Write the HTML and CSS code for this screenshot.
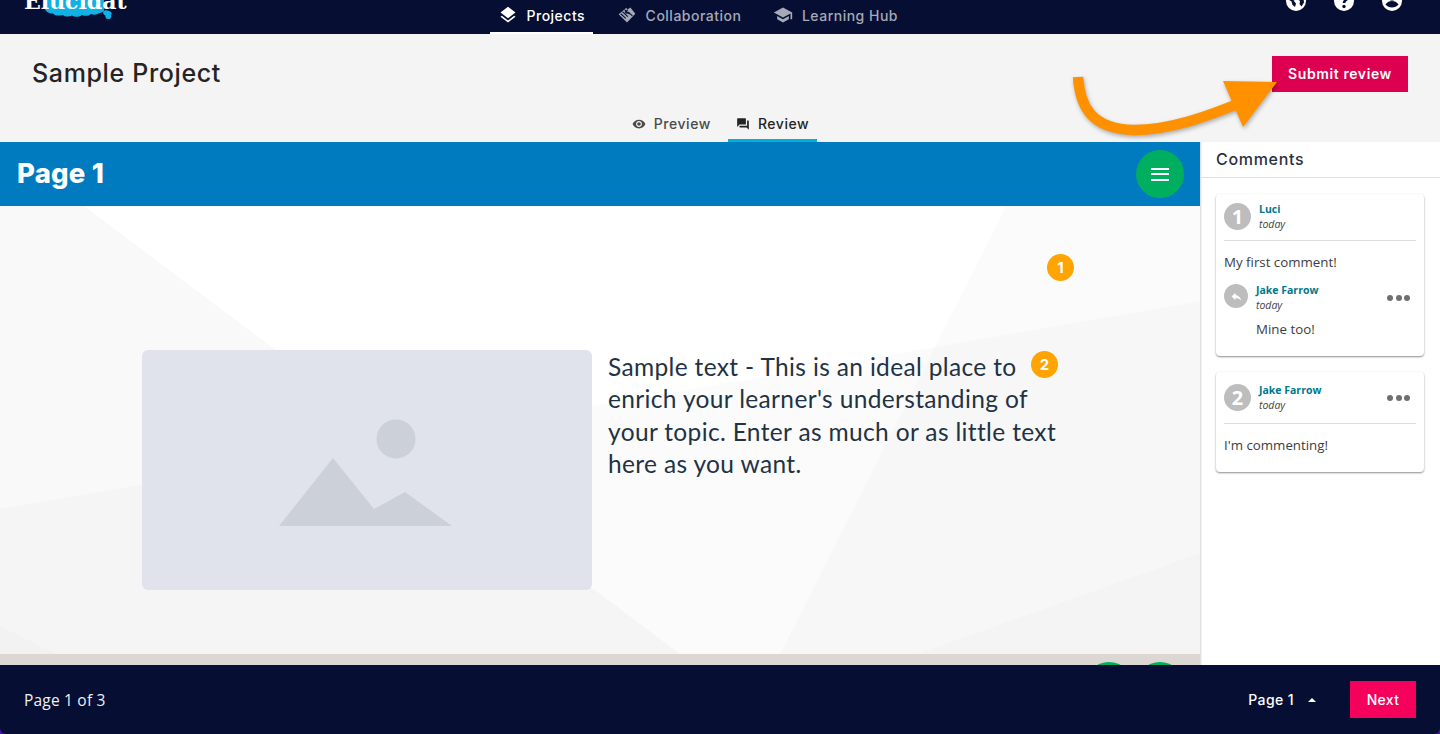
FILE: index.html
```html
<!DOCTYPE html>
<html lang="en">
<head>
<meta charset="utf-8">
<title>Sample Project</title>
<link rel="stylesheet" href="styles.css">
</head>
<body>
<div class="app">
  <header class="topnav">
    <div class="logo">
      <svg class="logo-cloud" width="70" height="22" viewBox="0 0 70 22"><path fill="#10b2e6" d="M0 0H60V10C60 12 57 13 55 13C53 15 50 15 47 14C45 16 41 16.500 38 15C36 17 31 17.500 28 15.500C25 17 21 17 19 15C16 16 11 16 9 13.500C5 14 1 11 0 7Z"/><path fill="#10b2e6" d="M59 12C60 10 63 9.500 65 11C67.500 11 68.500 14 67 15C68 17 66.500 19.500 64 19C62 19 61 17 61.500 15.500C60 15 59 14 59 12Z"/></svg>
      <span class="logo-text">Elucidat</span>
    </div>
    <nav class="navtabs">
      <a class="navtab is-active">
        <svg class="navicon" viewBox="0 0 24 24"><path d="M11.990 18.540l-7.370-5.730L3 14.070l9 7 9-7-1.630-1.270-7.380 5.740zM12 16l7.360-5.730L21 9l-9-7-9 7 1.630 1.270L12 16z"/></svg>
        <span>Projects</span>
      </a>
      <a class="navtab">
        <svg class="navicon" viewBox="0 0 24 24"><path d="M11 3.500L13 5L16 3L22 10.500L12 21L2 11Z"/><path class="navicon-cut" d="M9 5.500L15 11M6.500 8L13 14M4.500 10.500L10.500 16M13 5.500L10 8.500C11 10 12.500 10 14 9L18.500 13"/></svg>
        <span>Collaboration</span>
      </a>
      <a class="navtab">
        <svg class="navicon" viewBox="0 0 24 24"><path d="M5 13.180v4L12 21l7-3.820v-4L12 17l-7-3.820zM12 3L1 9l11 6 9-4.910V17h2V9L12 3z"/></svg>
        <span>Learning Hub</span>
      </a>
    </nav>
    <div class="navtools">
      <svg class="tool" viewBox="0 0 20 20"><circle cx="10" cy="10" r="10" fill="#fff"/><path fill="#060f33" d="M5 3.500l5 1 .5 4-3 1 2.500 3-1 3.500-2.500-2-1-3.500-3-2c.3-2.500 1.200-3.800 2.500-5zM13 6l4.500 1 .5 4.500-2.500 4-2-2.500.5-3-2-1.500z"/></svg>
      <svg class="tool" viewBox="0 0 20 20"><circle cx="10" cy="10" r="10" fill="#fff"/><path fill="none" stroke="#060f33" stroke-width="2.600" d="M6.500 6.500C6.500 4.500 8 3 10.200 3S13.800 4.400 13.800 6.200C13.800 8.700 10 9 10 12"/><circle cx="10" cy="15.500" r="1.700" fill="#060f33"/></svg>
      <svg class="tool" viewBox="0 0 20 20"><circle cx="10" cy="10" r="10" fill="#fff"/><circle cx="10" cy="6" r="3.500" fill="#060f33"/><path fill="#060f33" d="M3.500 13.500C5 11 7.500 10 10 10s5 1 6.500 3.500C15 15.500 12.500 16.500 10 16.500s-5-1-6.500-3z"/></svg>
    </div>
  </header>

  <section class="projecthead">
    <div class="titlerow">
      <h1 class="title">Sample Project</h1>
      <button class="submit">Submit review</button>
    </div>
    <div class="subtabs">
      <a class="subtab">
        <svg class="subicon" viewBox="0 0 24 24"><path d="M12 4.500C7 4.500 2.730 7.610 1 12c1.730 4.390 6 7.500 11 7.500s9.270-3.110 11-7.500c-1.730-4.390-6-7.500-11-7.500zM12 17c-2.760 0-5-2.240-5-5s2.240-5 5-5 5 2.240 5 5-2.240 5-5 5zm0-8c-1.660 0-3 1.340-3 3s1.340 3 3 3 3-1.340 3-3-1.340-3-3-3z"/></svg>
        <span>Preview</span>
      </a>
      <a class="subtab is-active">
        <svg class="subicon" viewBox="0 0 24 24"><path d="M21 6h-2v9H6v2c0 .55.45 1 1 1h11l4 4V7c0-.55-.45-1-1-1zm-4 6V3c0-.55-.45-1-1-1H3c-.55 0-1 .45-1 1v14l4-4h10c.55 0 1-.45 1-1z"/></svg>
        <span>Review</span>
      </a>
    </div>
    <svg class="callout" width="220" height="70" viewBox="0 0 220 70">
      <path d="M8 7C10 35 20 59 64 60C100 60 135 47 170 33" fill="none" stroke="#ff9000" stroke-width="10.500"/>
      <path d="M153 11L207 12L173 57Z" fill="#ff9000"/>
    </svg>
  </section>

  <div class="workspace">
    <main class="lesson">
      <div class="pagebar">
        <h2 class="pagetitle">Page 1</h2>
        <button class="menubtn" aria-label="Menu"><i></i><i></i><i></i></button>
      </div>
      <div class="stage">
        <svg class="stage-bg" width="1200" height="448" viewBox="0 0 1200 448" preserveAspectRatio="none">
          <path fill="#f9f9f9" d="M0 0H84L680 448H0Z"/>
          <path fill="#000" fill-opacity=".015" d="M0 303L1200 95V448H0Z"/>
          <path fill="#000" fill-opacity=".014" d="M1006 0H1200V448H780Z"/>
          <path fill="#000" fill-opacity=".012" d="M917 448L1200 347V448Z"/>
          <path fill="#000" fill-opacity=".012" d="M0 420L57 448H0Z"/>
        </svg>
        <div class="media">
          <div class="placeholder">
            <svg width="176" height="110" viewBox="0 0 176 110"><circle cx="117" cy="20" r="19.500" fill="#ccd0d9"/><path fill="#ccd0d9" d="M0 107L54 39L95 90L126 73L173 107Z"/></svg>
          </div>
          <p class="bodytext">Sample text - This is an ideal place to enrich your learner's understanding of your topic. Enter as much or as little text here as you want.</p>
          <span class="pin pin-one">1</span>
          <span class="pin pin-two">2</span>
        </div>
      </div>
      <div class="lesson-foot"><i class="fab"></i><i class="fab"></i></div>
    </main>

    <aside class="comments">
      <h3 class="comments-title">Comments</h3>
      <div class="comment-list">
        <article class="card">
          <div class="card-head">
            <span class="avatar">1</span>
            <div class="meta"><strong class="author">Luci</strong><em class="when">today</em></div>
          </div>
          <div class="card-body">
            <p class="msg">My first comment!</p>
            <div class="reply">
              <span class="avatar avatar-sm"><svg width="13" height="13" viewBox="0 0 24 24"><path fill="#fff" d="M10 9V5l-7 7 7 7v-4.100c5 0 8.500 1.600 11 5.100-1-5-4-10-11-11z"/></svg></span>
              <div class="reply-main">
                <strong class="author">Jake Farrow</strong><em class="when">today</em>
                <p class="msg msg-reply">Mine too!</p>
              </div>
              <span class="dots"><i></i><i></i><i></i></span>
            </div>
          </div>
        </article>
        <article class="card">
          <div class="card-head card-head-tall">
            <span class="avatar">2</span>
            <div class="meta"><strong class="author">Jake Farrow</strong><em class="when">today</em></div>
            <span class="dots dots-head"><i></i><i></i><i></i></span>
          </div>
          <div class="card-body card-body-short">
            <p class="msg">I'm commenting!</p>
          </div>
        </article>
      </div>
    </aside>
  </div>

  <footer class="pager">
    <span class="pager-count">Page 1 of 3</span>
    <div class="pager-actions">
      <span class="pager-select">Page 1<i class="caret"></i></span>
      <button class="next">Next</button>
    </div>
  </footer>
</div>
</body>
</html>
```

FILE: styles.css
```css
* { box-sizing: border-box; }
html, body { margin: 0; height: 100%; background: #4a12a8; overflow: hidden; }
p, h1, h2, h3 { margin: 0; }
button { border: 0; padding: 0; font: inherit; cursor: pointer; }
.app { height: 734px; display: flex; flex-direction: column; font-family: Inter, "Liberation Sans", sans-serif; border-radius: 0 0 6px 6px; overflow: hidden; }

.topnav { height: 34px; flex: none; background: #060f33; display: flex; padding: 0 38px 0 24px; overflow: hidden; }
.logo { width: 466px; flex: none; position: relative; }
.logo-cloud { position: absolute; left: 20px; top: 0; }
.logo-text { position: relative; display: block; margin-top: -11px; font: 700 22px/24px "DejaVu Serif", serif; color: #fff; }
.navtabs { display: flex; gap: 16px; }
.navtab { display: flex; align-items: center; height: 34px; padding: 0 8px 2px 8px; gap: 8.500px; font-size: 14px; font-weight: 500; letter-spacing: .5px; color: #a6a9b6; fill: #a6a9b6; border-bottom: 2px solid transparent; }
.navtab.is-active { color: #fff; fill: #fff; border-bottom-color: #fff; }
.navicon { width: 20px; height: 20px; flex: none; }
.navicon-cut { fill: none; stroke: #060f33; stroke-width: 1.300; }
.navtools { margin-left: auto; display: flex; gap: 28px; margin-top: -9px; }
.tool { width: 20px; height: 20px; }

.projecthead { height: 108px; flex: none; background: #f4f4f4; display: flex; flex-direction: column; position: relative; }
.titlerow { display: flex; justify-content: space-between; align-items: flex-start; padding: 22px 32px 0; height: 84px; }
.title { font-size: 25px; line-height: 34px; font-weight: 500; color: #242424; letter-spacing: .65px; }
.submit { width: 136px; height: 36px; padding-bottom: 2px; background: #de0050; color: #fff; font-size: 14px; font-weight: 600; letter-spacing: .6px; }
.subtabs { display: flex; justify-content: center; height: 24px; }
.subtab { display: flex; align-items: center; gap: 8px; height: 24px; padding: 0 8px 10px 9px; font-size: 14px; font-weight: 500; color: #4a4a4a; fill: #4a4a4a; letter-spacing: .55px; border-bottom: 3px solid transparent; }
.subtab.is-active { color: #242424; fill: #242424; border-bottom-color: #00b0d8; margin-left: 9px; padding-left: 8px; }
.subicon { width: 14px; height: 14px; flex: none; }
.callout { position: absolute; left: 1070px; top: 36px; filter: drop-shadow(1px 2px 2px rgba(0, 0, 0, .3)); z-index: 2; }

.workspace { flex: 1; min-height: 0; display: flex; }
.lesson { width: 1200px; flex: none; display: flex; flex-direction: column; }
.pagebar { height: 64px; flex: none; background: #007bc0; display: flex; align-items: center; justify-content: space-between; padding: 0 16px 0 17px; }
.pagetitle { font-size: 27.500px; font-weight: 800; color: #fff; letter-spacing: .2px; margin-top: -2px; }
.menubtn { width: 48px; height: 48px; border-radius: 50%; background: #00ae5f; display: flex; flex-direction: column; align-items: center; justify-content: center; gap: 3.500px; }
.menubtn i { display: block; width: 18px; height: 2px; background: #fff; }
.stage { flex: 1; min-height: 0; background: #fff; position: relative; padding-top: 144px; }
.stage-bg { position: absolute; left: 0; top: 0; }
.media { position: relative; width: 916px; margin: 0 auto; display: flex; gap: 16px; align-items: flex-start; }
.placeholder { width: 450px; height: 240px; flex: none; border-radius: 6px; background: #e0e3eb; display: flex; align-items: center; justify-content: center; padding-top: 8px; }
.bodytext { width: 450px; margin-top: 1px; font-family: Lato, "Noto Sans", sans-serif; font-size: 24.500px; line-height: 32.400px; color: #1f3344; letter-spacing: .35px; }
.pin { position: absolute; width: 27px; height: 27px; border-radius: 50%; background: #ffa400; color: #fff; font: 700 15px/27px Inter, sans-serif; text-align: center; }
.pin-one { left: 905px; top: -96px; }
.pin-two { left: 889px; top: 1px; }
.lesson-foot { height: 11px; flex: none; background: #dcd7d3; overflow: hidden; display: flex; justify-content: flex-end; gap: 3px; padding: 8px 16px 0 0; }
.fab { width: 48px; height: 48px; flex: none; border-radius: 50%; background: #00ae5f; }

.comments { flex: 1; background: #fff; box-shadow: inset 1px 0 0 #e0e0e0, inset 2px 0 1px #f0f0f0; display: flex; flex-direction: column; font-family: "Open Sans", sans-serif; }
.comments-title { height: 36px; flex: none; padding-left: 16px; font: 500 16px/35px Inter, sans-serif; letter-spacing: .7px; color: #2b3040; border-bottom: 1px solid #e0e0e0; }
.comment-list { padding: 16px; display: flex; flex-direction: column; gap: 16px; }
.card { background: #fff; border-radius: 4px; box-shadow: 0 1px 2px rgba(0, 0, 0, .45); padding: 0 8px; }
.card-head { display: flex; align-items: center; gap: 8px; height: 47px; border-bottom: 1px solid #dedede; padding-bottom: 1px; }
.card-head-tall { height: 52px; padding-bottom: 0; }
.avatar { width: 27px; height: 27px; flex: none; border-radius: 50%; background: #bdbdbd; color: #fff; font: 700 20px/27px "Open Sans", sans-serif; text-align: center; display: flex; align-items: center; justify-content: center; }
.avatar-sm { width: 24px; height: 24px; margin-top: 1px; }
.meta { display: flex; flex-direction: column; }
.author { display: block; font-size: 10.500px; line-height: 15px; font-weight: 700; color: #00788a; }
.when { display: block; font-size: 10.500px; line-height: 15px; font-style: italic; color: #444; }
.card-body { padding: 12px 0 0; height: 115px; }
.card-body-short { height: 48px; }
.msg { font-size: 13.300px; line-height: 18px; color: #3c3c44; }
.reply { display: flex; gap: 8px; margin-top: 12px; }
.reply-main { flex: 1; }
.reply-main .msg-reply { margin-top: 7px; }
.dots { display: flex; gap: 2.500px; margin: 12px 6px 0 0; }
.dots i { width: 6px; height: 6px; border-radius: 50%; background: #707070; display: block; }
.dots-head { margin: 0 6px 0 auto; }

.pager { height: 69px; flex: none; background: #060f33; display: flex; align-items: center; justify-content: space-between; padding: 0 24px; color: #fff; }
.pager-count { font: 400 15.500px "Open Sans", sans-serif; letter-spacing: .2px; color: #f0f0f0; }
.pager-actions { display: flex; align-items: center; gap: 34px; }
.pager-select { display: flex; align-items: center; gap: 14px; font-size: 14px; font-weight: 500; letter-spacing: .4px; }
.caret { width: 0; height: 0; border: 4px solid transparent; border-top: 0; border-bottom: 4px solid #fff; }
.next { width: 66px; height: 37px; background: #f5005a; color: #fff; font-size: 14px; font-weight: 500; letter-spacing: .3px; }
```
